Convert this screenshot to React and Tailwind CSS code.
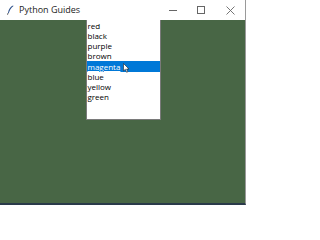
import React from "react";

const colors = ["red", "black", "purple", "brown", "magenta", "blue", "yellow", "green"];

function Feather() {
  return (
    <svg width="7" height="10" viewBox="0 0 7 10">
      <path d="M6 0.5 C3.5 1.5 1.5 4 1 8 L1.8 8.2 C2.5 5.5 4 3 6.5 1 Z" fill="#2b4f8a" />
      <path d="M1 8 L0.5 9.8" stroke="#444" strokeWidth="0.8" />
    </svg>
  );
}

export default function App() {
  return (
    <div
      className="w-[246px] h-[205px] flex flex-col bg-[#486645] border-r border-r-[#9a9a9a] border-b-2 border-b-[#2a3a4a]"
      style={{ fontFamily: '"Open Sans", "Noto Sans", sans-serif' }}
    >
      <div className="h-[20px] shrink-0 bg-white flex items-center text-[9px] text-[#222]">
        <div className="pl-[7px] pr-[4px] flex items-center">
          <Feather />
        </div>
        <span className="ml-[1px]">Python Guides</span>
        <div className="ml-auto flex items-center h-full text-[#555]">
          <div className="w-[28px] flex justify-center">
            <div className="w-[8px] h-px bg-[#666]" />
          </div>
          <div className="w-[28px] flex justify-center">
            <div className="w-[8px] h-[8px] border border-[#666]" />
          </div>
          <div className="w-[30px] flex justify-center">
            <svg width="9" height="9" viewBox="0 0 9 9">
              <path d="M0.5 0.5 L8.5 8.5 M8.5 0.5 L0.5 8.5" stroke="#666" strokeWidth="0.9" />
            </svg>
          </div>
        </div>
      </div>
      <div className="flex-1 flex justify-center">
        <div className="ml-[1px] w-[75px] h-[100px] bg-white border border-[#7a7a7a] border-t-0 flex flex-col pt-[1px] text-[8px] leading-[10px] text-black">
          {colors.map((c) =>
            c === "magenta" ? (
              <div key={c} className="relative h-[11px] bg-[#0078d7] text-white flex items-center pl-[1px]">
                <span className="underline">{c}</span>
                <svg className="absolute left-[36px] top-[2px]" width="7" height="10" viewBox="0 0 7 10">
                  <path d="M0.5 0.5 L0.5 8 L2.3 6.3 L3.6 9.3 L4.8 8.8 L3.6 6 L6 6 Z" fill="white" stroke="#222" strokeWidth="0.6" />
                </svg>
              </div>
            ) : (
              <div key={c} className="h-[10px] pl-[1px]">{c}</div>
            )
          )}
        </div>
      </div>
    </div>
  );
}
